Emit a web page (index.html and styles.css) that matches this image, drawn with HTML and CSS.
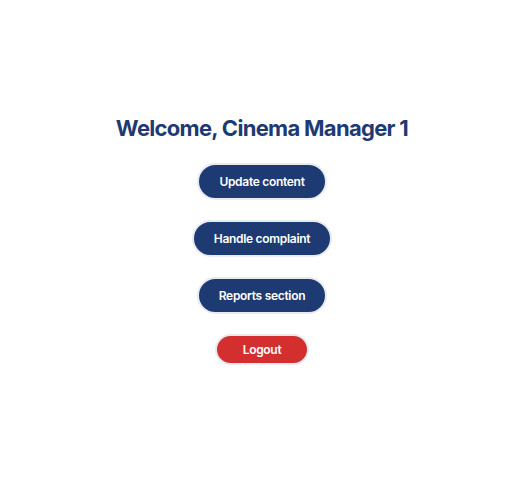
FILE: index.html
```html
<!DOCTYPE html>
<html>
<head>
<meta charset="utf-8">
<link rel="stylesheet" href="styles.css">
</head>
<body>
<main class="page">
  <h1 class="title">Welcome, Cinema Manager 1</h1>
  <div class="actions">
    <button class="btn btn-primary">Update content</button>
    <button class="btn btn-primary">Handle complaint</button>
    <button class="btn btn-primary">Reports section</button>
    <button class="btn btn-danger">Logout</button>
  </div>
</main>
</body>
</html>
```

FILE: styles.css
```css
html, body {
  margin: 0;
  padding: 0;
  background: #ffffff;
  font-family: Inter, "Noto Sans", sans-serif;
}
.page {
  height: 478px;
  display: flex;
  flex-direction: column;
  align-items: center;
  justify-content: center;
}
.title {
  margin: 0 0 20px 0;
  font-size: 22px;
  font-weight: 700;
  color: #1e3a72;
  letter-spacing: -0.7px;
  line-height: 29px;
}
.actions {
  display: flex;
  flex-direction: column;
  align-items: center;
  gap: 20px;
}
.btn {
  font-family: Inter, "Noto Sans", sans-serif;
  font-size: 12px;
  font-weight: 600;
  letter-spacing: -0.3px;
  color: #ffffff;
  border: 2px solid #e8eaf0;
  border-radius: 20px;
  padding: 0 20px;
  height: 37px;
  cursor: pointer;
}
.btn-primary {
  background: #1e3a72;
}
.btn-danger {
  background: #d32f2f;
  height: 31px;
  padding: 0 26px;
}
```
